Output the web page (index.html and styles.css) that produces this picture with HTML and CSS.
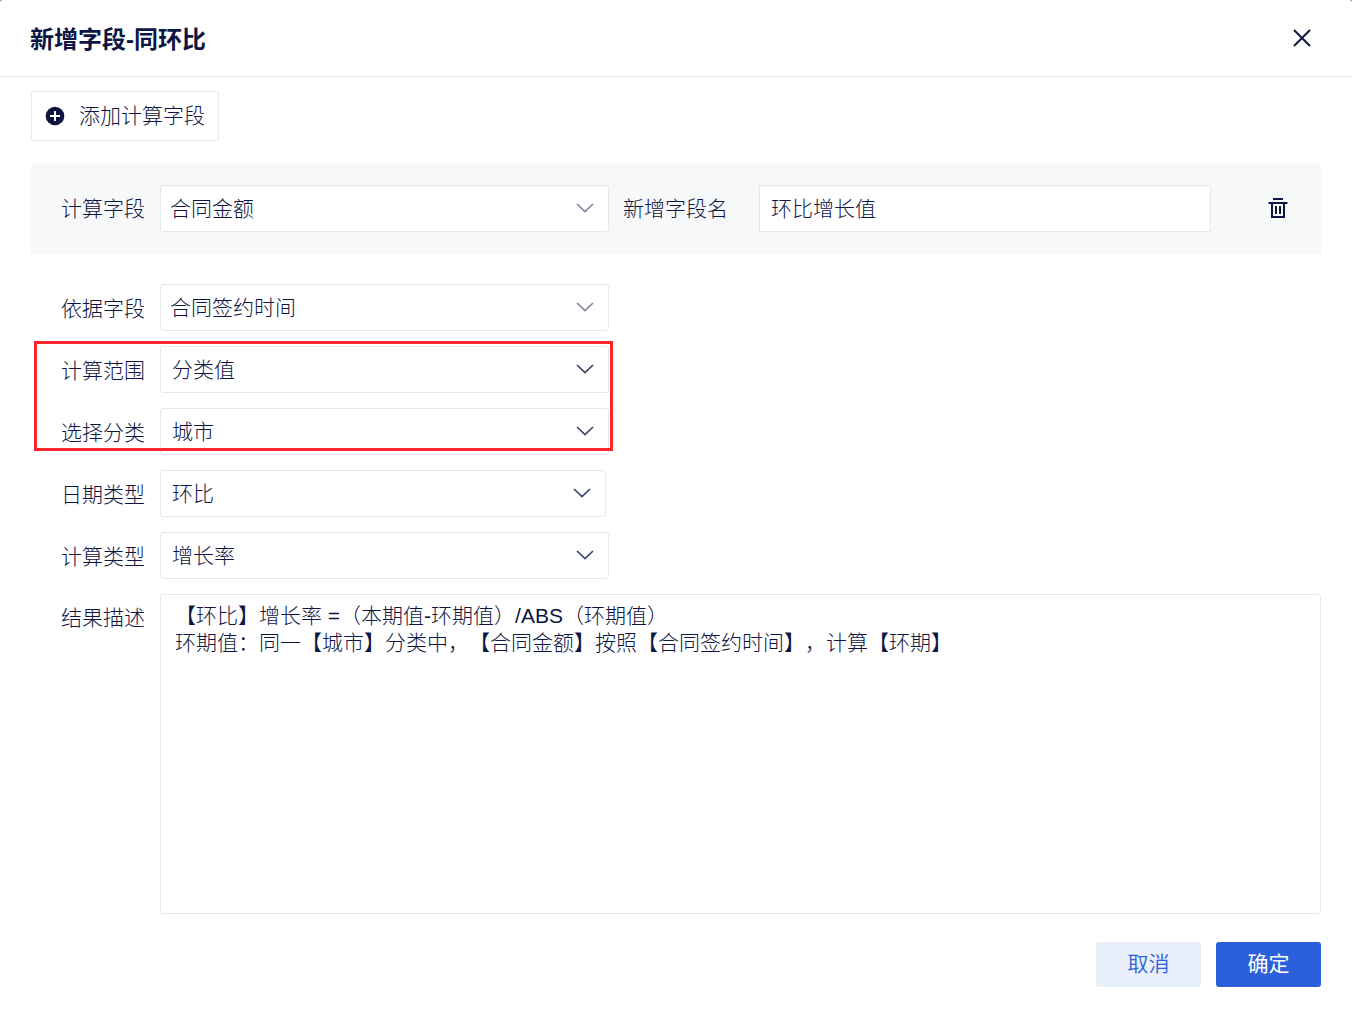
FILE: index.html
```html
<!DOCTYPE html>
<html lang="zh-CN">
<head>
<meta charset="utf-8">
<meta name="viewport" content="width=device-width, initial-scale=1">
<title>新增字段-同环比</title>
<link rel="stylesheet" href="styles.css">
</head>
<body>
<form class="dialog">
  <header class="dialog-header">
    <h1 class="dialog-title">新增字段-同环比</h1>
    <button class="icon-button close" type="button" aria-label="关闭">
      <svg width="20" height="20" viewBox="0 0 20 20"><path d="M2 2L18 18M18 2L2 18"/></svg>
    </button>
  </header>

  <main class="dialog-body">
    <button class="add-button" type="button">
      <svg width="20" height="20" viewBox="0 0 20 20"><circle cx="10" cy="10" r="9.3"/><path d="M10 5V15M5 10H15"/></svg>
      <span>添加计算字段</span>
    </button>

    <div class="row row-panel">
      <label for="calc-field">计算字段</label>
      <div class="control muted">
        <select id="calc-field"><option>合同金额</option></select>
        <svg class="chevron" width="18" height="10" viewBox="0 0 18 10"><path d="M1 1L9 8.5L17 1"/></svg>
      </div>
      <label class="name-label" for="new-name">新增字段名</label>
      <input class="text-input" id="new-name" type="text" value="环比增长值">
      <button class="icon-button delete" type="button" aria-label="删除">
        <svg width="20" height="20" viewBox="0 0 20 20"><path d="M5 1H15M.5 5H19.5"/><path d="M4 5V19H16V5"/><path d="M8 8V16M12 8V16"/></svg>
      </button>
    </div>

    <div class="fields">
      <div class="row">
        <label for="base-field">依据字段</label>
        <div class="control muted">
          <select id="base-field"><option>合同签约时间</option></select>
          <svg class="chevron" width="18" height="10" viewBox="0 0 18 10"><path d="M1 1L9 8.5L17 1"/></svg>
        </div>
      </div>
      <div class="row row-marked">
        <label for="range">计算范围</label>
        <div class="control">
          <select id="range"><option>分类值</option></select>
          <svg class="chevron" width="18" height="10" viewBox="0 0 18 10"><path d="M1 1L9 8.5L17 1"/></svg>
        </div>
        <label for="category">选择分类</label>
        <div class="control">
          <select id="category"><option>城市</option></select>
          <svg class="chevron" width="18" height="10" viewBox="0 0 18 10"><path d="M1 1L9 8.5L17 1"/></svg>
        </div>
      </div>
      <div class="row">
        <label for="date-type">日期类型</label>
        <div class="control control-short">
          <select id="date-type"><option>环比</option></select>
          <svg class="chevron" width="18" height="10" viewBox="0 0 18 10"><path d="M1 1L9 8.5L17 1"/></svg>
        </div>
      </div>
      <div class="row">
        <label for="calc-type">计算类型</label>
        <div class="control">
          <select id="calc-type"><option>增长率</option></select>
          <svg class="chevron" width="18" height="10" viewBox="0 0 18 10"><path d="M1 1L9 8.5L17 1"/></svg>
        </div>
      </div>
      <div class="description">
        <label for="result">结果描述</label>
        <textarea id="result" spellcheck="false">【环比】增长率 =（本期值-环期值）/ABS（环期值）
环期值：同一【城市】分类中，【合同金额】按照【合同签约时间】，计算【环期】</textarea>
      </div>
    </div>
  </main>

  <footer class="dialog-footer">
    <button class="button" type="button">取消</button>
    <button class="button button-primary" type="submit">确定</button>
  </footer>
</form>
</body>
</html>
```
FILE: styles.css
```css
:root {
  --ink: #0d1542;
  --line: #e6e7eb;
  --blue: #2b60da;
}

* {
  box-sizing: border-box;
}

html {
  background: #8c8c8c;
}

body {
  margin: 0;
  color: var(--ink);
  font: 300 21px/27px "Liberation Sans", "Noto Sans CJK SC", sans-serif;
  text-spacing-trim: space-all;
}

button,
input,
select,
textarea {
  margin: 0;
  color: inherit;
  font: inherit;
  text-spacing-trim: inherit;
}

button {
  padding: 0;
  border: 0;
  background: none;
  cursor: pointer;
}

svg {
  display: block;
  fill: none;
  stroke: currentColor;
  stroke-width: 2;
}

.dialog {
  display: flex;
  flex-direction: column;
  min-height: 100vh;
  border-radius: 3px 3px 0 0;
  background: #fff;
}

.dialog-header {
  display: flex;
  align-items: center;
  justify-content: space-between;
  height: 77px;
  padding: 0 40px 0 30px;
  border-bottom: 1px solid var(--line);
}

.dialog-title {
  margin: 4px 0 0;
  font-size: 24px;
  line-height: 36px;
  font-weight: 700;
}

.dialog-body {
  display: flex;
  flex: 1;
  flex-direction: column;
  padding: 14px 31px 28px;
}

.add-button {
  display: flex;
  align-items: center;
  align-self: flex-start;
  gap: 14px;
  height: 50px;
  padding: 0 13px 2px;
  border: 1px solid var(--line);
  border-radius: 3px;
  background: #fff;
}

.add-button svg {
  margin-top: 2px;
}

.add-button circle {
  fill: currentColor;
  stroke: none;
}

.add-button path {
  stroke: #fff;
}

.row {
  display: grid;
  grid-template-columns: 99px minmax(0, 449fr) 150px minmax(0, 452fr) 110px;
  align-items: center;
  padding-left: 30px;
}

.row-panel {
  height: 90px;
  margin: 23px 0 30px;
  padding-bottom: 2px;
  background: #f7f8fa;
}

.name-label {
  padding-left: 14px;
}

.row label {
  padding-top: 1px;
}

.control {
  position: relative;
}

.control-short {
  margin-right: 3px;
}

select,
.text-input {
  display: block;
  width: 100%;
  height: 47px;
  padding: 0 40px 0 11px;
  border: 1px solid var(--line);
  border-radius: 3px;
  background: #fff;
  appearance: none;
}

.muted select {
  padding-left: 9px;
}

.text-input {
  padding: 0 11px 2px;
  border-radius: 0;
}

.chevron {
  position: absolute;
  top: 18px;
  right: 15px;
  stroke-width: 1.7;
  opacity: .8;
  pointer-events: none;
}

.muted .chevron {
  opacity: .5;
}

.icon-button svg {
  margin: auto;
}

.delete {
  justify-self: center;
  margin-left: 24px;
}

.fields {
  display: flex;
  flex: 1;
  flex-direction: column;
  gap: 15px;
}

.row-marked {
  position: relative;
  row-gap: 15px;
}

.row-marked > label {
  grid-column: 1;
}

/* red frame around the range and category rows */
.row-marked::after {
  content: "";
  position: absolute;
  grid-column: 1 / 3;
  grid-row: 1 / 3;
  inset: -5px -4px 4px -27px;
  border: 3px solid #fb252f;
  pointer-events: none;
}

.description {
  display: grid;
  flex: 1;
  grid-template-columns: 99px minmax(0, 1fr);
  padding-left: 30px;
}

.description label {
  padding-top: 10px;
}

textarea {
  display: block;
  width: 100%;
  min-height: 160px;
  padding: 7px 14px;
  border: 1px solid var(--line);
  border-radius: 3px;
  background: #fff;
  resize: none;
}

.dialog-footer {
  display: flex;
  justify-content: flex-end;
  gap: 15px;
  padding: 0 31px 27px;
}

.button {
  width: 105px;
  height: 45px;
  padding-bottom: 2px;
  border-radius: 3px;
  background: #e9effb;
  color: var(--blue);
  font-weight: 350;
}

.button-primary {
  background: var(--blue);
  color: #fff;
  font-weight: 400;
}
```
